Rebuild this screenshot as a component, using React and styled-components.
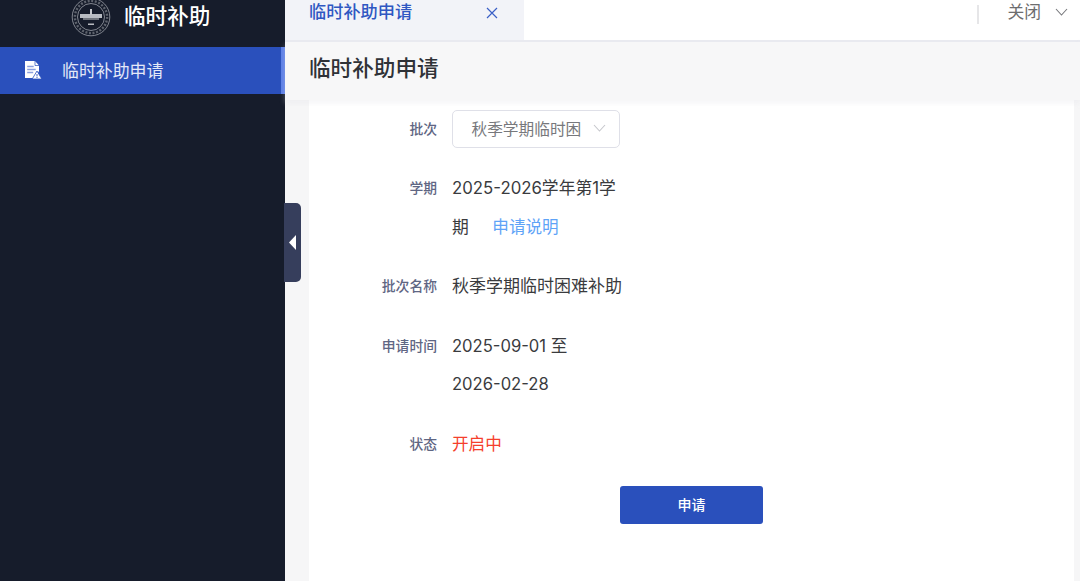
import React from 'react';
import styled, { createGlobalStyle } from 'styled-components';

const Global = createGlobalStyle`
  html, body { margin: 0; padding: 0; height: 100%; overflow: hidden; background: #fff; }
  body { font-family: Inter, "Noto Sans CJK SC", sans-serif; }
  * { box-sizing: border-box; }
`;

const Shell = styled.div`
  display: flex;
  width: 1080px;
  height: 581px;
  overflow: hidden;
  position: relative;
`;

const Sidebar = styled.aside`
  width: 285px;
  flex: none;
  background: #161c2b;
  display: flex;
  flex-direction: column;
`;

const Brand = styled.div`
  height: 47px;
  flex: none;
  display: flex;
  align-items: flex-start;
  padding-left: 71px;
  gap: 13px;
  overflow: hidden;
`;

const Seal = styled.svg`
  width: 40px;
  height: 40px;
  flex: none;
  margin-top: -3px;
`;

const BrandName = styled.div`
  font-size: 21.6px;
  font-weight: 500;
  line-height: 33px;
  color: #fff;
`;

const MenuItem = styled.div`
  height: 47px;
  display: flex;
  align-items: center;
  padding: 0 0 2px 24px;
  gap: 20px;
  background: #2a50bc;
  border-right: 4px solid #5c7fe6;
  color: #e4e9f8;
  font-size: 16.9px;
`;

const Main = styled.main`
  flex: 1;
  min-width: 0;
  display: flex;
  flex-direction: column;
  background: #f6f6f7;
`;

const TopBar = styled.header`
  height: 42px;
  flex: none;
  display: flex;
  align-items: stretch;
  background: #fff;
  border-bottom: 2px solid #e9eaf0;
`;

const Tab = styled.div`
  width: 239px;
  display: flex;
  align-items: flex-start;
  justify-content: space-between;
  padding: 0 26px 0 24px;
  background: #f2f3f8;
  color: #2f57c2;
  font-size: 17.2px;
  font-weight: 500;
  line-height: 24px;
`;

const TabClose = styled.svg`
  width: 12px;
  height: 12px;
  margin-top: 7px;
`;

const TopActions = styled.div`
  margin-left: auto;
  display: flex;
  align-items: flex-start;
  padding-right: 12px;
`;

const Divider = styled.div`
  width: 2px;
  height: 19px;
  margin-top: 5px;
  margin-right: 28px;
  background: #e6e6e8;
`;

const CloseLabel = styled.div`
  font-size: 16.8px;
  line-height: 24px;
  color: #6d6d6f;
  margin-right: 14px;
`;

const Caret = styled.svg`
  width: 13px;
  height: 8px;
  margin-top: 8px;
`;

const PageTitle = styled.div`
  height: 58px;
  flex: none;
  display: flex;
  align-items: center;
  padding: 0 0 9px 24px;
  background: #f7f7f8;
  color: #2f3237;
  font-size: 21.6px;
  font-weight: 500;
  box-shadow: 0 3px 5px rgba(225, 226, 232, 0.35);
  position: relative;
  z-index: 1;
`;

const Body = styled.div`
  flex: 1;
  min-height: 0;
  padding: 0 6px 0 24px;
`;

const Card = styled.section`
  height: 100%;
  background: #fff;
  padding-top: 10px;
`;

const Form = styled.div`
  display: grid;
  grid-template-columns: 128px 170px;
  column-gap: 15px;
  row-gap: 21px;
`;

const Label = styled.div`
  text-align: right;
  font-size: 13.8px;
  font-weight: 500;
  line-height: 38px;
  color: #5f6683;
`;

const Value = styled.div`
  font-size: ${p => p.$size || '16.6px'};
  line-height: 38.5px;
  color: ${p => p.$tone === 'danger' ? '#f5402c' : '#3a3b3e'};
  white-space: ${p => p.$nowrap ? 'nowrap' : 'normal'};
`;

const DateText = styled.span`
  white-space: nowrap;
`;

const Link = styled.span`
  margin-left: 23.5px;
  font-size: 16.6px;
  color: #5ea3f7;
`;

const Select = styled.div`
  width: 168px;
  height: 38px;
  display: flex;
  align-items: center;
  padding: 0 13px 2px 18.5px;
  justify-content: space-between;
  border: 1.5px solid #dfe0e8;
  border-radius: 5px;
  font-size: 15.7px;
  color: #77787c;
  white-space: nowrap;
  overflow: hidden;
`;

const SelectCaret = styled.svg`
  width: 13px;
  height: 8px;
  flex: none;
`;

const Actions = styled.div`
  display: flex;
  justify-content: center;
  margin-top: 23px;
`;

const Submit = styled.button`
  width: 143px;
  height: 38px;
  border: none;
  border-radius: 3px;
  padding: 0 0 3px;
  background: #2a50bc;
  color: #fff;
  font-family: inherit;
  font-size: 14px;
  font-weight: 500;
`;

const Handle = styled.div`
  position: absolute;
  left: 284px;
  top: 203px;
  width: 17px;
  height: 79px;
  display: flex;
  align-items: center;
  padding-left: 5px;
  background: #363e5c;
  border-radius: 0 5px 5px 0;
  z-index: 2;
`;

const HandleArrow = styled.svg`
  width: 7px;
  height: 15px;
`;

const SealMark = () => (
  <Seal viewBox="0 0 40 40" fill="none">
    <circle cx="20" cy="20" r="18.8" stroke="#b0b3ba" strokeWidth="0.7" />
    <circle cx="20" cy="20" r="13.5" stroke="#b0b3ba" strokeWidth="0.7" />
    <circle cx="20" cy="20" r="16.1" stroke="#8f929a" strokeWidth="2.4" strokeDasharray="2 1.6" opacity="0.6" />
    <path d="M9 17h22v4H9z" fill="#b8bbc2" />
    <path d="M12 21h16v2H12z" fill="#6f737c" />
    <path d="M19 12h2v6h-2z" fill="#c4c6cc" />
    <path d="M17 26.5h6v1.5h-6z" fill="#b9bbc1" />
  </Seal>
);

const DocIcon = () => (
  <svg width="18" height="18" viewBox="0 0 18 18" style={{ flex: 'none' }}>
    <path d="M1 0h10l4 4.5V10l-4 7H1z" fill="#fff" />
    <path d="M11 0v4.5h4" fill="none" stroke="#2a50bc" strokeWidth="0.7" />
    <path d="M3.2 5.5h6.5M3.2 8.5h8.5M3.2 11.5h6" stroke="#8ba0de" strokeWidth="1.3" />
    <path d="M13 10l4.8 8H8.2z" fill="#fff" stroke="#2a50bc" strokeWidth="0.8" />
    <path d="M13 13v2.4M13 16v1" stroke="#2a50bc" strokeWidth="0.9" />
  </svg>
);

export default function App() {
  return (
    <Shell>
      <Global />
      <Sidebar>
        <Brand>
          <SealMark />
          <BrandName>临时补助</BrandName>
        </Brand>
        <MenuItem>
          <DocIcon />
          临时补助申请
        </MenuItem>
      </Sidebar>
      <Handle>
        <HandleArrow viewBox="0 0 7 15"><path d="M7 0v15L0 7.5z" fill="#fff" /></HandleArrow>
      </Handle>
      <Main>
        <TopBar>
          <Tab>
            临时补助申请
            <TabClose viewBox="0 0 12 12" fill="none">
              <path d="M1 1l10 10M11 1L1 11" stroke="#3a5fc6" strokeWidth="1.2" />
            </TabClose>
          </Tab>
          <TopActions>
            <Divider />
            <CloseLabel>关闭</CloseLabel>
            <Caret viewBox="0 0 13 8" fill="none">
              <path d="M1 1l5.5 6L12 1" stroke="#77787c" strokeWidth="1.1" />
            </Caret>
          </TopActions>
        </TopBar>
        <PageTitle>临时补助申请</PageTitle>
        <Body>
          <Card>
            <Form>
              <Label>批次</Label>
              <Select>
                秋季学期临时困
                <SelectCaret viewBox="0 0 13 8" fill="none">
                  <path d="M1 1l5.5 6L12 1" stroke="#c6c7cc" strokeWidth="1.1" />
                </SelectCaret>
              </Select>
              <Label>学期</Label>
              <Value $size="16.8px">2025-2026学年第1学期<Link>申请说明</Link></Value>
              <Label>批次名称</Label>
              <Value $size="17px" $nowrap>秋季学期临时困难补助</Value>
              <Label>申请时间</Label>
              <Value><DateText>2025-09-01 至</DateText> <DateText>2026-02-28</DateText></Value>
              <Label>状态</Label>
              <Value $tone="danger">开启中</Value>
            </Form>
            <Actions>
              <Submit>申请</Submit>
            </Actions>
          </Card>
        </Body>
      </Main>
    </Shell>
  );
}
